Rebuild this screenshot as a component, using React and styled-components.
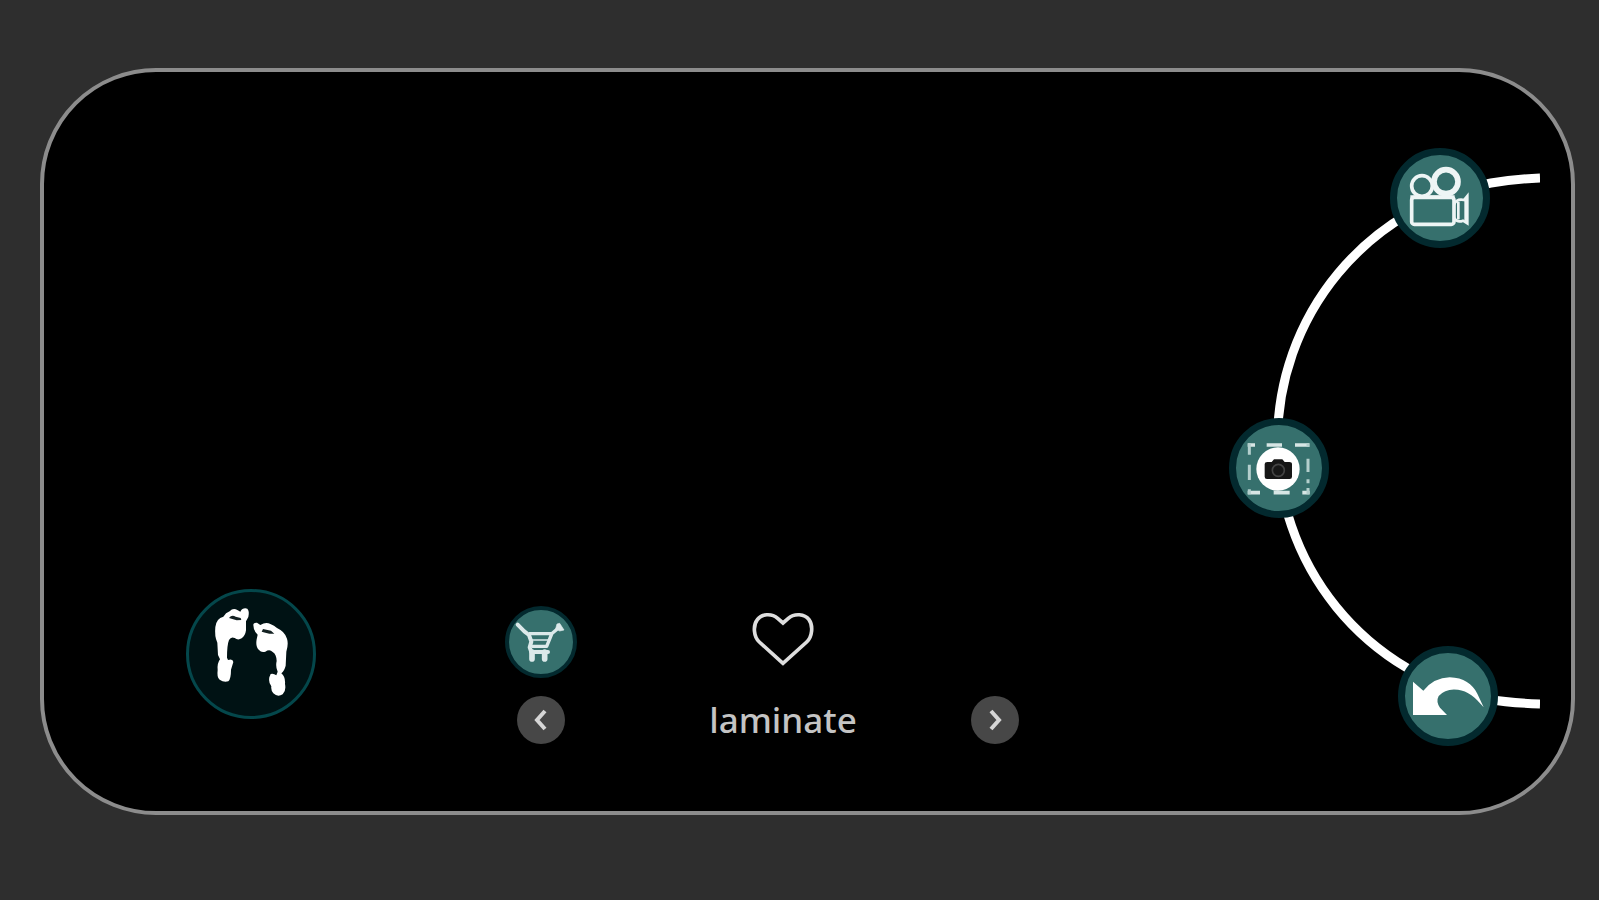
import React, { useState } from 'react';
import styled, { createGlobalStyle } from 'styled-components';

const GlobalStyle = createGlobalStyle`
    * {
        box-sizing: border-box;
    }

    body {
        margin: 0;
        background: #2e2e2e;
        font-family: 'Noto Sans', 'Open Sans', sans-serif;
    }
`;

const Page = styled.div`
    display: flex;
    min-height: 100vh;
    padding: 68px 24px 85px 40px;
`;

const Device = styled.main`
    flex: 1;
    display: flex;
    align-items: flex-end;
    padding: 0 31px 0 142px;
    background: #000;
    border: 4px solid #8c8c8c;
    border-radius: 116px;
`;

const RoundButton = styled.button`
    display: flex;
    flex: none;
    align-items: center;
    justify-content: center;
    width: ${props => props.$size}px;
    height: ${props => props.$size}px;
    padding: 0;
    border: ${props => props.$ring || 0}px solid #03292e;
    border-radius: 50%;
    background: ${props => props.$fill || '#36706d'};
    cursor: pointer;

    svg {
        flex: none;
    }
`;

const WalkButton = styled(RoundButton)`
    margin: 0 189px 92px 0;
    border-color: #04474b;
`;

const Picker = styled.section`
    display: grid;
    grid-template-columns: 72px 1fr 48px;
    row-gap: 18px;
    align-items: center;
    justify-items: center;
    width: 514px;
    margin-bottom: 67px;
`;

const Middle = styled.div`
    display: flex;
    padding-left: 18px;
`;

const HeartButton = styled.button`
    display: flex;
    padding: 0;
    border: none;
    background: none;
    cursor: pointer;
`;

const Material = styled.span`
    color: #c4c4c4;
    font-size: 35px;
    font-weight: 500;
    line-height: 48px;
`;

const Dial = styled.nav`
    position: relative;
    display: flex;
    flex-direction: column;
    align-self: flex-start;
    width: 311px;
    margin: 76px 0 0 auto;
`;

const Arc = styled.svg`
    position: absolute;
    inset: 0;
    pointer-events: none;
`;

const DialItem = styled.div`
    position: relative;
    display: flex;
    justify-content: ${props => props.$side};
    padding: 0 ${props => props.$inset || 0}px ${props => props.$below || 0}px 0;
`;

const FeetIcon = () => (
    <svg width="96" height="96" viewBox="100 107 288 288" fill="#fff" aria-hidden="true">
        <path d="M137 170 Q140 144 161 139 Q168 127 180 123 Q190 112 203 119 L212 124 Q219 111 233 115 Q240 122 236 140 L229 153 L229 180 Q227 196 216 204 Q205 211 195 203 Q184 198 178 209 Q172 224 172 262 L175 269 Q190 264 191 275 L184 298 Q184 326 176 333 Q162 337 150 328 Q141 322 144 299 Q142 279 151 267 L145 254 L143 217 Q134 198 137 170Z" />
        <path d="M251 164 Q251 156 262 157 L272 164 Q289 153 302 161 Q314 166 322 173 Q345 183 352 205 Q357 221 350 244 L348 286 Q344 302 335 309 Q348 320 346 341 Q350 362 339 372 Q324 382 311 369 Q303 359 305 348 Q296 337 299 321 L303 311 Q311 308 320 315 L324 304 Q317 288 321 272 Q320 251 309 245 Q300 235 287 244 Q275 248 268 239 Q257 229 261 207 L264 193 Q251 182 251 164Z" />
        <path d="M178 143 Q186 132 198 139 L213 143 L215 149 L201 150 L188 146Z M276 184 L280 176 L304 181 L314 190 L299 190 L287 187Z" fill="#132122" />
    </svg>
);

const CartIcon = () => (
    <svg width="54" height="54" viewBox="74 76 162 162" fill="none" stroke="#dce9ea" aria-hidden="true">
        <path d="M85 105 L105 125 L119 136 L126 156 L121 173 L126 187 H176" strokeWidth="12" strokeLinejoin="round" strokeLinecap="round" />
        <path d="M119 132 H187 L211 112 M187 133 L172 170 H127" strokeWidth="10" strokeLinejoin="round" />
        <path d="M128 151 H176 M130 170 H170" strokeWidth="4" />
        <path d="M128 187 V208 M166 187 V208" strokeWidth="17" strokeLinecap="round" />
        <path d="M203 103 L211 101 L224 121 L211 124 L199 117Z" fill="#dce9ea" strokeWidth="2" />
    </svg>
);

const HeartIcon = ({ filled }) => (
    <svg width="64" height="64" viewBox="184 60 192 192" fill={filled ? '#d8d8d8' : 'none'} stroke="#dedede" strokeWidth="11" aria-hidden="true">
        <path d="M280 220 L209 156 C192 140 189 107 203 89 C216 71 246 69 264 85 L280 99 L296 85 C314 69 345 71 358 89 C371 107 368 140 351 156Z" />
    </svg>
);

const ChevronIcon = ({ d }) => (
    <svg width="24" height="24" viewBox="0 0 24 24" fill="none" stroke="#d6d6d6" strokeWidth="4" aria-hidden="true">
        <path d={d} />
    </svg>
);

const VideoIcon = () => (
    <svg width="72" height="72" viewBox="101 96 216 216" fill="none" stroke="#eef5f5" aria-hidden="true">
        <circle cx="155" cy="168" r="31" strokeWidth="11" />
        <circle cx="227" cy="155" r="36" strokeWidth="17" />
        <rect x="124" y="202" width="127" height="81" rx="8" strokeWidth="11" />
        <path d="M120 201 H253" strokeWidth="11" />
        <path d="M251 224 Q259 205 281 210 L291 198 V280 L278 272 Q261 279 251 264" strokeWidth="8" />
        <path d="M264 215 V268 M286 207 V273" strokeWidth="8" />
    </svg>
);

const CaptureIcon = () => (
    <svg width="72" height="72" viewBox="84 94 216 216" aria-hidden="true">
        <path d="M98 133 H120 M155 133 H201 M240 133 H283 M98 276 H135 M176 276 H224 M262 276 H284" stroke="#d8e6e5" strokeWidth="11" />
        <path d="M103 128 V162 M103 192 V238 M103 266 V281 M279 128 V139 M279 174 V214 M279 236 V248 M279 262 V281" stroke="#b4cfcd" strokeWidth="9" />
        <circle cx="189" cy="205" r="65" fill="#fff" />
        <path d="M149 190 Q149 184 157 184 H170 L177 176 H202 L209 184 H223 Q231 184 231 191 V228 Q231 235 224 235 H156 Q149 235 149 228Z" fill="#161616" />
        <circle cx="190" cy="209" r="18" fill="#171717" stroke="#444" strokeWidth="5" />
    </svg>
);

const UndoIcon = () => (
    <svg width="72" height="72" viewBox="127 91 216 216" fill="#fff" aria-hidden="true">
        <path d="M130 156 L161 183 Q193 144 240 143 C282 144 308 163 323 192 L342 233 C319 204 293 183 265 180 Q228 175 207 199 Q198 216 211 234 L232 256 H130Z" />
    </svg>
);

const materials = ['laminate', 'parquet', 'carpet', 'tile'];

const App = () => {
    const [index, setIndex] = useState(0);
    const [liked, setLiked] = useState(false);

    function step(amount) {
        setIndex((index + amount + materials.length) % materials.length);
    }

    return (
        <Page>
            <GlobalStyle />
            <Device>
                <WalkButton $size={130} $ring={3} $fill="#001214" aria-label="Walk">
                    <FeetIcon />
                </WalkButton>
                <Picker>
                    <RoundButton $size={72} $ring={4} aria-label="Add to cart">
                        <CartIcon />
                    </RoundButton>
                    <Middle>
                        <HeartButton aria-label="Favourite" aria-pressed={liked} onClick={() => setLiked(!liked)}>
                            <HeartIcon filled={liked} />
                        </HeartButton>
                    </Middle>
                    <span />
                    <RoundButton $size={48} $fill="#474747" aria-label="Previous" onClick={() => step(-1)}>
                        <ChevronIcon d="M16 3 L8 12 L16 21" />
                    </RoundButton>
                    <Middle>
                        <Material>{materials[index]}</Material>
                    </Middle>
                    <RoundButton $size={48} $fill="#474747" aria-label="Next" onClick={() => step(1)}>
                        <ChevronIcon d="M8 3 L16 12 L8 21" />
                    </RoundButton>
                </Picker>
                <Dial>
                    <Arc width="311" height="598" viewBox="0 0 311 598" fill="none" aria-hidden="true">
                        <path d="M311 30 Q285 31 262 35 A263 263 0 0 0 259 551 Q280 555 311 556" stroke="#fff" strokeWidth="9" />
                    </Arc>
                    <DialItem $side="flex-end" $inset={50} $below={170}>
                        <RoundButton $size={100} $ring={7} aria-label="Record video">
                            <VideoIcon />
                        </RoundButton>
                    </DialItem>
                    <DialItem $side="flex-start" $below={128}>
                        <RoundButton $size={100} $ring={7} aria-label="Take photo">
                            <CaptureIcon />
                        </RoundButton>
                    </DialItem>
                    <DialItem $side="flex-end" $inset={42}>
                        <RoundButton $size={100} $ring={7} aria-label="Undo">
                            <UndoIcon />
                        </RoundButton>
                    </DialItem>
                </Dial>
            </Device>
        </Page>
    );
};

export default App;
